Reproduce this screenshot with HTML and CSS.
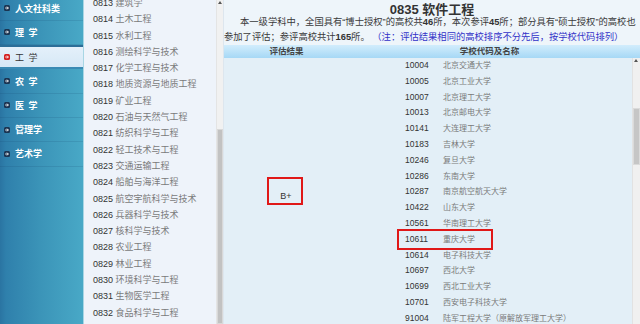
FILE: index.html
```html
<!DOCTYPE html>
<html lang="zh-CN">
<head>
  <meta charset="UTF-8" />
  <title>0835 软件工程</title>
  <link rel="stylesheet" href="styles.css">
</head>
<body>
  <div class="page">
    <nav class="side">
      <ul class="cats">
        <li><svg class="ico" viewBox="0 0 6 6"><rect width="6" height="6" rx="1.5"/><path d="M1.2 3h3M3 1.6L4.4 3 3 4.4"/></svg>人文社科类</li>
        <li><svg class="ico" viewBox="0 0 6 6"><rect width="6" height="6" rx="1.5"/><path d="M1.2 3h3M3 1.6L4.4 3 3 4.4"/></svg>理&ensp;学</li>
        <li class="active"><svg class="ico" viewBox="0 0 6 6"><rect width="6" height="6" rx="1.5"/><path d="M1.2 3h3M3 1.6L4.4 3 3 4.4"/></svg>工&ensp;学</li>
        <li><svg class="ico" viewBox="0 0 6 6"><rect width="6" height="6" rx="1.5"/><path d="M1.2 3h3M3 1.6L4.4 3 3 4.4"/></svg>农&ensp;学</li>
        <li><svg class="ico" viewBox="0 0 6 6"><rect width="6" height="6" rx="1.5"/><path d="M1.2 3h3M3 1.6L4.4 3 3 4.4"/></svg>医&ensp;学</li>
        <li><svg class="ico" viewBox="0 0 6 6"><rect width="6" height="6" rx="1.5"/><path d="M1.2 3h3M3 1.6L4.4 3 3 4.4"/></svg>管理学</li>
        <li><svg class="ico" viewBox="0 0 6 6"><rect width="6" height="6" rx="1.5"/><path d="M1.2 3h3M3 1.6L4.4 3 3 4.4"/></svg>艺术学</li>
      </ul>
    </nav>

    <div class="sub">
      <ul class="subjects">
        <li><span class="code">0813</span> 建筑学</li>
        <li><span class="code">0814</span> 土木工程</li>
        <li><span class="code">0815</span> 水利工程</li>
        <li><span class="code">0816</span> 测绘科学与技术</li>
        <li><span class="code">0817</span> 化学工程与技术</li>
        <li><span class="code">0818</span> 地质资源与地质工程</li>
        <li><span class="code">0819</span> 矿业工程</li>
        <li><span class="code">0820</span> 石油与天然气工程</li>
        <li><span class="code">0821</span> 纺织科学与工程</li>
        <li><span class="code">0822</span> 轻工技术与工程</li>
        <li><span class="code">0823</span> 交通运输工程</li>
        <li><span class="code">0824</span> 船舶与海洋工程</li>
        <li><span class="code">0825</span> 航空宇航科学与技术</li>
        <li><span class="code">0826</span> 兵器科学与技术</li>
        <li><span class="code">0827</span> 核科学与技术</li>
        <li><span class="code">0828</span> 农业工程</li>
        <li><span class="code">0829</span> 林业工程</li>
        <li><span class="code">0830</span> 环境科学与工程</li>
        <li><span class="code">0831</span> 生物医学工程</li>
        <li><span class="code">0832</span> 食品科学与工程</li>
      </ul>
    </div>
    <div class="sub-bar"><span class="arrow"></span><span class="thumb"></span></div>

    <main class="main">
      <h1 class="title"><span class="num">0835</span> 软件工程</h1>
      <p class="intro">
        <span class="first">本一级学科中，全国具有“博士授权”的高校共<b>46</b>所，本次参评<b>45</b>所；部分具有“硕士授权”的高校也</span><br>
        参加了评估；参评高校共计<b>165</b>所。 <span class="note">（注：评估结果相同的高校排序不分先后，按学校代码排列）</span>
      </p>
      <div class="thead">
        <span class="h-grade">评估结果</span>
        <span class="h-school">学校代码及名称</span>
      </div>
      <div class="tbody">
        <div class="grade">B+</div>
        <ul class="schools">
          <li><span class="code">10004</span>北京交通大学</li>
          <li><span class="code">10005</span>北京工业大学</li>
          <li><span class="code">10007</span>北京理工大学</li>
          <li><span class="code">10013</span>北京邮电大学</li>
          <li><span class="code">10141</span>大连理工大学</li>
          <li><span class="code">10183</span>吉林大学</li>
          <li><span class="code">10246</span>复旦大学</li>
          <li><span class="code">10286</span>东南大学</li>
          <li><span class="code">10287</span>南京航空航天大学</li>
          <li><span class="code">10422</span>山东大学</li>
          <li><span class="code">10561</span>华南理工大学</li>
          <li><span class="code">10611</span>重庆大学</li>
          <li><span class="code">10614</span>电子科技大学</li>
          <li><span class="code">10697</span>西北大学</li>
          <li><span class="code">10699</span>西北工业大学</li>
          <li><span class="code">10701</span>西安电子科技大学</li>
          <li><span class="code">91004</span>陆军工程大学（原解放军理工大学）</li>
        </ul>
        <div class="vbar"><span class="arrow"></span><span class="thumb"></span></div>
      </div>

      <!-- red annotation boxes -->
      <div class="mark mark-grade"></div>
      <div class="mark mark-school"></div>
    </main>
  </div>
</body>
</html>
```

FILE: styles.css
```css
* { box-sizing: border-box; }
body {
  margin: 0;
  font-family: 'Liberation Sans', 'Noto Sans CJK SC', sans-serif;
  background: #eef4fa;
  color: #333;
  overflow: hidden;
}
ul { list-style: none; margin: 0; padding: 0; }

.page {
  display: flex;
  height: 324px;
  overflow: hidden;
}

/* left category menu */
.side {
  width: 84px;
  flex-shrink: 0;
  background: linear-gradient(to right, #2a74a2 0, #2f80ac 6px, #3b94b8 40px, #48a8c6 82px);
  border-right: 1px solid #a8d6e4;
  overflow: hidden;
}
.cats { margin-top: -3.5px; }
.cats li {
  height: 24.3px;
  display: flex;
  align-items: center;
  gap: 5px;
  padding-left: 4px;
  font-size: 9px;
  font-weight: bold;
  color: #fff;
  border-bottom: 1px solid rgba(20, 70, 110, 0.15);
}
.cats .ico { width: 6px; height: 6px; flex-shrink: 0; }
.cats .ico rect { fill: #1b3452; }
.cats .ico path { fill: none; stroke: #fff; stroke-width: 0.9; }
.cats li.active {
  background: linear-gradient(#e4f0fa, #d6e8f6);
  color: #333;
  font-weight: normal;
  border-top: 2px solid #2c6e98;
  border-bottom: 2px solid #3a8ab4;
}
.cats li.active .ico rect { fill: #d42020; }

/* subject list */
.sub {
  width: 132px;
  flex-shrink: 0;
  background: #eef3fa;
  overflow: hidden;
}
.subjects { margin-top: -5px; padding-left: 9px; }
.subjects li {
  height: 16.3px;
  line-height: 16.3px;
  font-size: 9px;
  color: #7a7a7a;
  white-space: nowrap;
}
.subjects .code { color: #333; }

.sub-bar {
  width: 8px;
  flex-shrink: 0;
  background: #f1f1f1;
  border-left: 1px solid #e4e4e4;
  border-right: 1px solid #dde6ee;
  position: relative;
}
.sub-bar .arrow, .vbar .arrow {
  position: absolute;
  top: 1px;
  left: 1px;
  border: 2px solid transparent;
  border-bottom: 3px solid #555;
  border-top: 0;
}
.sub-bar .thumb {
  position: absolute;
  top: 129px;
  left: 0;
  right: 0;
  bottom: 0;
  background: #c2c2c2;
  border: 1px solid #d8d8d8;
}

/* main content */
.main {
  flex: 1;
  position: relative;
  background: #eef5fa;
  overflow: hidden;
}
.title {
  margin: 0;
  padding-top: 2px;
  height: 18px;
  line-height: 16px;
  text-align: center;
  font-size: 13px;
  font-weight: bold;
  color: #333;
}
.intro {
  margin: -3px 0 0;
  font-size: 9.3px;
  line-height: 15px;
  color: #3a3a3a;
  white-space: nowrap;
}
.intro .first { padding-left: 16px; }
.intro b { color: #333; }
.note { color: #3232c8; }

.thead {
  display: flex;
  height: 13px;
  line-height: 13px;
  background: linear-gradient(#d2edfc, #a6d8f6);
  font-size: 8.5px;
  font-weight: bold;
  color: #444;
}
.h-grade { width: 121px; text-align: center; padding-left: 4px; }
.h-school { flex: 1; text-align: center; padding-right: 6px; }

.tbody {
  display: flex;
  background: #e3eff7;
  height: 280px;
}
.grade {
  width: 121px;
  flex-shrink: 0;
  display: flex;
  align-items: center;
  justify-content: center;
  padding: 0 0 4px 3px;
  font-size: 9px;
  color: #333;
}
.schools { flex: 1; padding-left: 60px; }
.schools li {
  height: 15.8px;
  line-height: 15.8px;
  font-size: 8px;
  color: #7a7a7a;
  white-space: nowrap;
}
.schools .code {
  display: inline-block;
  width: 38px;
  color: #333;
  font-size: 8.5px;
}
.vbar {
  width: 8px;
  flex-shrink: 0;
  position: relative;
  background: #f0f0f0;
  border-left: 1px solid #e2e2e2;
}
.vbar .thumb {
  position: absolute;
  top: 50px;
  height: 57px;
  left: 0;
  right: 0;
  background: #c6c6c6;
  border: 1px solid #dadada;
}

.mark {
  position: absolute;
  border: 2px solid #e01818;
}
.mark-grade { left: 43px; top: 177px; width: 36px; height: 28px; }
.mark-school { left: 173px; top: 229px; width: 96px; height: 21px; }
```
